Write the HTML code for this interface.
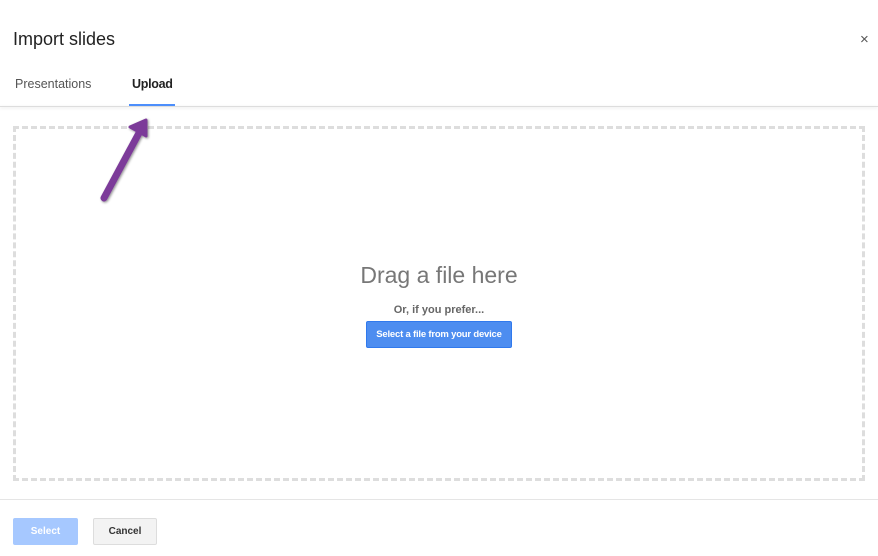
<!DOCTYPE html>
<html><head><style>
body{margin:0;width:878px;height:556px;background:#fff;font-family:"Liberation Sans",sans-serif;position:relative;overflow:hidden}
.a{position:absolute}
</style></head><body>
<div class="a" style="left:13px;top:29px;font-size:18px;color:#222">Import slides</div>
<div class="a" style="left:860px;top:31px;font-size:15px;color:#555">×</div>
<div class="a" style="left:15px;top:77px;font-size:12.5px;color:#555">Presentations</div>
<div class="a" style="left:132px;top:77px;font-size:12.5px;color:#222;font-weight:bold;letter-spacing:-0.3px">Upload</div>
<div class="a" style="left:129px;top:104px;width:46px;height:2px;background:#4d90fe"></div>
<div class="a" style="left:0;top:106px;width:878px;height:1px;background:#ddd;box-shadow:0 1px 3px rgba(0,0,0,.15)"></div>
<div class="a" style="left:13px;top:126px;width:846px;height:349px;border:3px dashed #ddd"></div>
<div class="a" style="left:0;top:262px;width:878px;text-align:center;font-size:23px;color:#777">Drag a file here</div>
<div class="a" style="left:0;top:304px;width:878px;text-align:center;font-size:11px;font-weight:bold;color:#666">Or, if you prefer...</div>
<div class="a" style="left:366px;top:321px;width:146px;height:27px;background:#4d8df0;border:1px solid #3079ed;box-sizing:border-box;border-radius:2px;color:#fff;font-size:9.5px;font-weight:bold;text-align:center;line-height:25px;letter-spacing:-0.2px">Select a file from your device</div>
<div class="a" style="left:0;top:499px;width:878px;height:1px;background:#e5e5e5"></div>
<div class="a" style="left:13px;top:518px;width:65px;height:27px;background:#a6c8ff;border-radius:2px;color:#fff;font-size:10px;font-weight:bold;text-align:center;line-height:27px">Select</div>
<div class="a" style="left:93px;top:518px;width:64px;height:27px;background:#f3f3f3;border:1px solid #ddd;box-sizing:border-box;border-radius:2px;color:#333;font-size:10px;font-weight:bold;text-align:center;line-height:25px">Cancel</div>
<svg class="a" style="left:0;top:0" width="878" height="556">
<defs><filter id="s"><feDropShadow dx="1" dy="1" stdDeviation="1.2" flood-opacity=".45"/></filter></defs>
<g filter="url(#s)" fill="#7b3b99" stroke="#7b3b99" stroke-linecap="round" stroke-linejoin="round">
<line x1="104" y1="198" x2="139" y2="133" stroke-width="7"/>
<polygon points="130,127 146,120 146,136" stroke-width="3"/>
</g>
</svg>
</body></html>
